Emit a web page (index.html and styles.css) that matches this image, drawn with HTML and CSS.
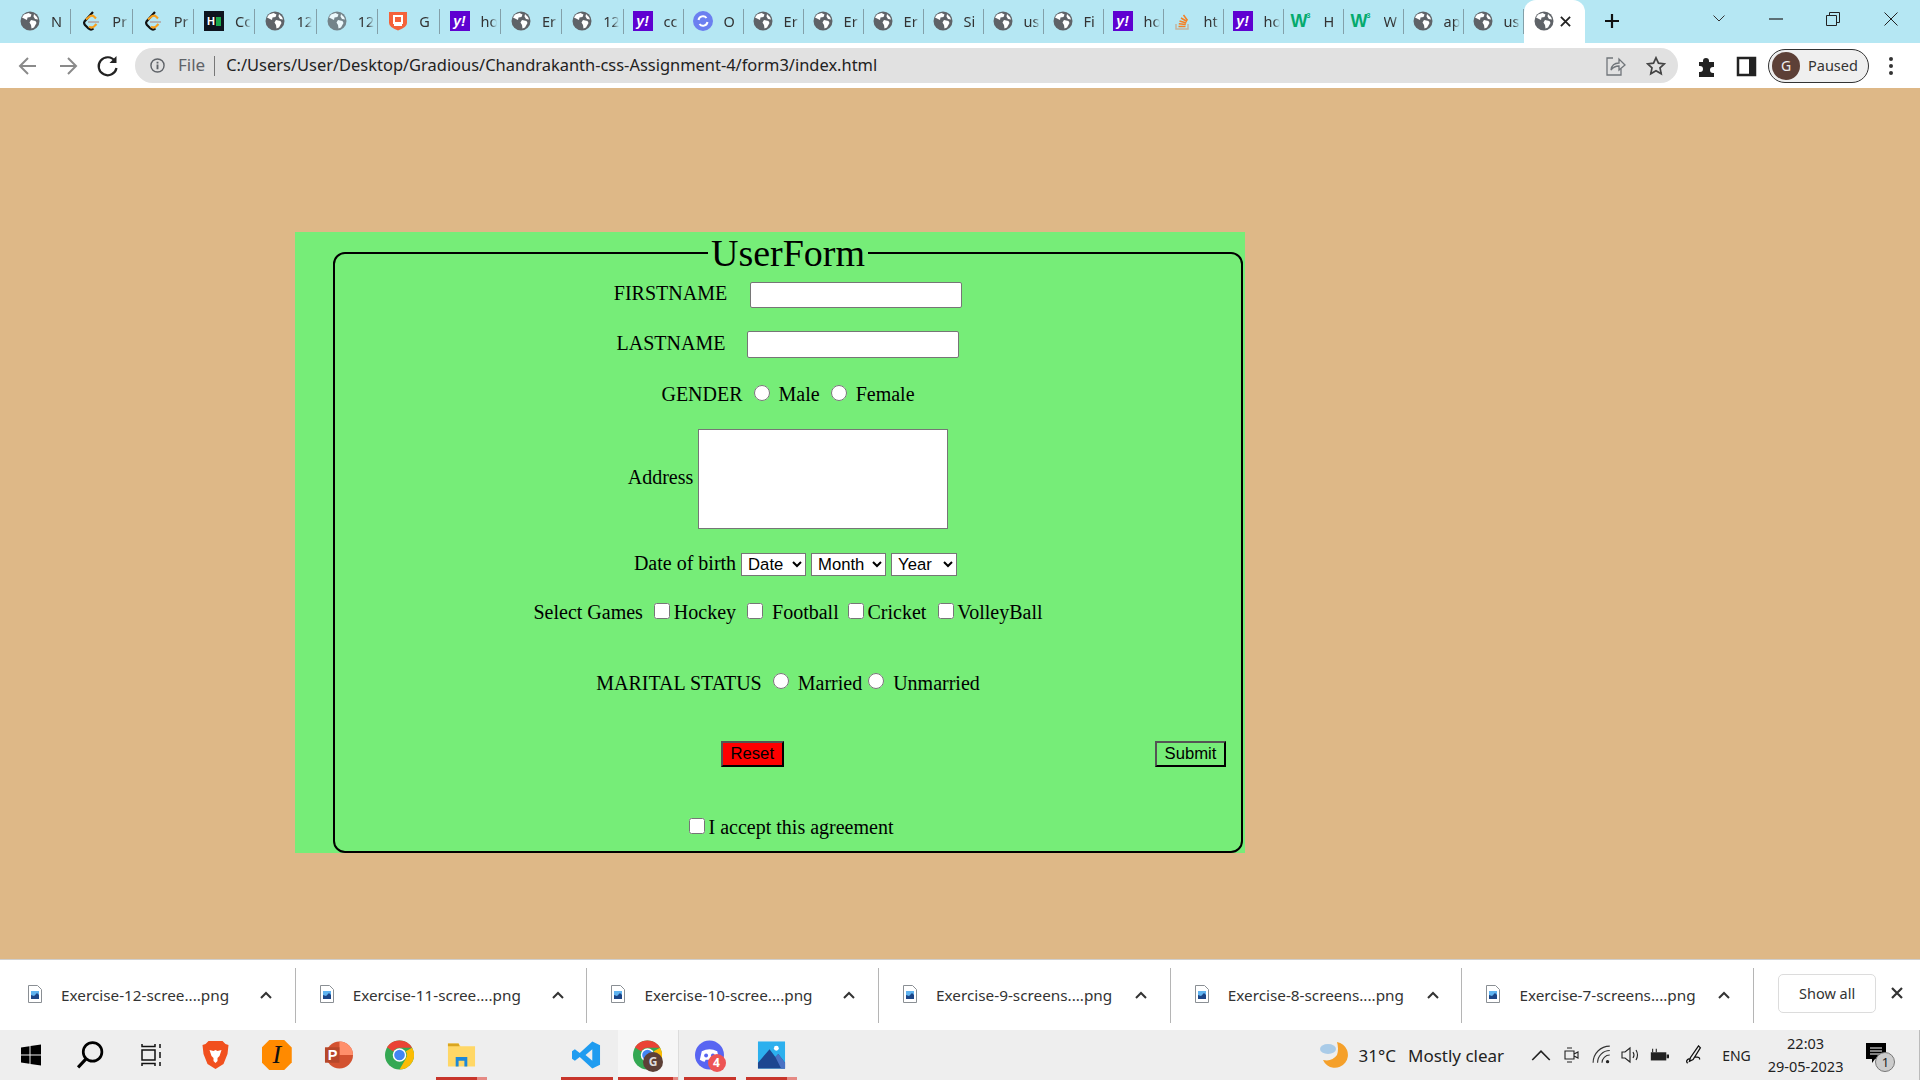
FILE: index.html
```html
<!DOCTYPE html>
<html lang="en">
<head>
  <meta charset="UTF-8" />
  <title>UserForm</title>
  <link rel="stylesheet" href="styles.css">
</head>
<body>

  <svg class="defs" width="0" height="0">
    <symbol id="globe" viewBox="0 0 20 20">
      <circle cx="10" cy="10" r="9.5" fill="currentColor"/>
      <path d="M4 3.5 8.5 2l3 1.5-1 2.5-3 .5-.5 2.5-3-1.5-2-1zM11 9l4.5 1 1 2-2.5 4.5-2.5 1-.5-3.500-1.500-2.500zM14 3l3 3 1 2.500-3-.5-1.500-2.500z" fill="#fff"/>
    </symbol>
    <symbol id="leet" viewBox="0 0 20 20">
      <path d="M12 1 3.500 10.500Q2.500 12 4 14l3.500 3.500q2.500 2 5 0" fill="none" stroke="#111" stroke-width="2.200"/>
      <path d="M7 11h11" stroke="#b3b3b3" stroke-width="2"/>
      <path d="M8 15.500q2.500 2 5 0l2.500-2.500" fill="none" stroke="#f89f1b" stroke-width="2.200"/>
      <path d="M5 8.500 9.500 5q2-1 3.500.5l2 2" fill="none" stroke="#f89f1b" stroke-width="2.200"/>
    </symbol>
    <symbol id="doc" viewBox="0 0 14 18">
      <path d="M.5.5h9l4 4v13H.5z" fill="#fff" stroke="#8a8f94"/>
      <path d="M3 6h8v8H3z" fill="#1c4587"/>
      <path d="M3 6h8v4l-2-2-3 3-3-1z" fill="#5fb3f0"/>
    </symbol>
    <symbol id="chev" viewBox="0 0 12 8">
      <path d="M1 7 6 2l5 5" fill="none" stroke="currentColor" stroke-width="2"/>
    </symbol>
    <symbol id="chrome" viewBox="0 0 30 30">
      <circle cx="15" cy="15" r="15" fill="#34a853"/>
      <path d="M15 0a15 15 0 0 1 13 7.500H15a7.500 7.500 0 0 0-6.500 3.750L2 7A15 15 0 0 1 15 0z" fill="#ea4335"/>
      <path d="M28 7.500A15 15 0 0 1 15 30l6.500-11.250A7.500 7.500 0 0 0 21.500 11z" fill="#fbbc04"/>
      <circle cx="15" cy="15" r="7" fill="#fff"/>
      <circle cx="15" cy="15" r="5.500" fill="#4285f4"/>
    </symbol>
  </svg>

  <div class="tabbar">
    <div class="tab"><svg class="fav"><use href="#globe"/></svg><span class="tab-title">N</span></div>
    <div class="tab"><svg class="fav"><use href="#leet"/></svg><span class="tab-title">Pr</span></div>
    <div class="tab"><svg class="fav"><use href="#leet"/></svg><span class="tab-title">Pr</span></div>
    <div class="tab"><span class="fav fav-hr">H<i></i></span><span class="tab-title">Cc</span></div>
    <div class="tab"><svg class="fav"><use href="#globe"/></svg><span class="tab-title">12</span></div>
    <div class="tab"><svg class="fav faded"><use href="#globe"/></svg><span class="tab-title">12</span></div>
    <div class="tab">
      <svg class="fav" viewBox="0 0 20 20"><path d="M1 1h18v11q0 4-9 7.500Q1 16 1 12z" fill="#f4623a"/><path d="M6 5h8v7H6zM6 14h8" fill="none" stroke="#fff" stroke-width="2"/></svg>
      <span class="tab-title">G</span>
    </div>
    <div class="tab"><span class="fav fav-y">y!</span><span class="tab-title">ho</span></div>
    <div class="tab"><svg class="fav"><use href="#globe"/></svg><span class="tab-title">Er</span></div>
    <div class="tab"><svg class="fav"><use href="#globe"/></svg><span class="tab-title">12</span></div>
    <div class="tab"><span class="fav fav-y">y!</span><span class="tab-title">cc</span></div>
    <div class="tab">
      <svg class="fav" viewBox="0 0 20 20"><circle cx="10" cy="10" r="10" fill="#6b7ff0"/><path d="M5.500 9a4.500 4.500 0 0 1 8-2M14.500 11a4.500 4.500 0 0 1-8 2" fill="none" stroke="#fff" stroke-width="2"/></svg>
      <span class="tab-title">O</span>
    </div>
    <div class="tab"><svg class="fav"><use href="#globe"/></svg><span class="tab-title">Er</span></div>
    <div class="tab"><svg class="fav"><use href="#globe"/></svg><span class="tab-title">Er</span></div>
    <div class="tab"><svg class="fav"><use href="#globe"/></svg><span class="tab-title">Er</span></div>
    <div class="tab"><svg class="fav"><use href="#globe"/></svg><span class="tab-title">Si</span></div>
    <div class="tab"><svg class="fav"><use href="#globe"/></svg><span class="tab-title">us</span></div>
    <div class="tab"><svg class="fav"><use href="#globe"/></svg><span class="tab-title">Fi</span></div>
    <div class="tab"><span class="fav fav-y">y!</span><span class="tab-title">ho</span></div>
    <div class="tab">
      <svg class="fav" viewBox="0 0 20 20"><path d="M3 13v5h12v-5" fill="none" stroke="#c4b5a0" stroke-width="1.500"/><path d="M5.500 15.500h7M5.800 12.800l7 .8M6.500 10l6.800 2M8 7l6 3.500M10.500 4l4 5.500" stroke="#f48024" stroke-width="1.500"/></svg>
      <span class="tab-title">ht</span>
    </div>
    <div class="tab"><span class="fav fav-y">y!</span><span class="tab-title">ho</span></div>
    <div class="tab"><span class="fav fav-w">W<sup>3</sup></span><span class="tab-title">H</span></div>
    <div class="tab"><span class="fav fav-w">W<sup>3</sup></span><span class="tab-title">W</span></div>
    <div class="tab"><svg class="fav"><use href="#globe"/></svg><span class="tab-title">ap</span></div>
    <div class="tab"><svg class="fav"><use href="#globe"/></svg><span class="tab-title">us</span></div>
    <div class="tab tab-active">
      <svg class="fav"><use href="#globe"/></svg>
      <svg class="tab-close" viewBox="0 0 12 12"><path d="M1 1l10 10M11 1 1 11" stroke="#222" stroke-width="2"/></svg>
    </div>
    <svg class="newtab" viewBox="0 0 16 16"><path d="M8 1v14M1 8h14" stroke="#111" stroke-width="2.200"/></svg>
    <div class="winctl">
      <svg class="ctl-list" viewBox="0 0 12 7"><path d="M.5.5 6 6 11.500.5" fill="none" stroke="#333"/></svg>
      <svg class="ctl-min" viewBox="0 0 14 2"><path d="M0 1h14" stroke="#222" stroke-width="1.200"/></svg>
      <svg class="ctl-max" viewBox="0 0 14 14"><path d="M.5 3.500h10v10H.5zM3.500 3.500v-3h10v10h-3" fill="none" stroke="#222"/></svg>
      <svg class="ctl-close" viewBox="0 0 14 14"><path d="M.5.5l13 13M13.500.5l-13 13" stroke="#222"/></svg>
    </div>
  </div>

  <div class="toolbar">
    <svg class="tool-icon" viewBox="0 0 40 40"><path d="M28 20H13M20 12l-8 8 8 8" fill="none" stroke="#8a8a8a" stroke-width="2"/></svg>
    <svg class="tool-icon" viewBox="0 0 40 40"><path d="M12 20h15M20 12l8 8-8 8" fill="none" stroke="#8a8a8a" stroke-width="2"/></svg>
    <svg class="tool-icon" viewBox="0 0 40 40"><path d="M27 15a9 9 0 1 0 1.500 7" fill="none" stroke="#222" stroke-width="2.200"/><path d="M28.500 10v7h-7z" fill="#222"/></svg>
    <div class="omnibox">
      <svg class="omni-info" viewBox="0 0 16 16"><circle cx="8" cy="8" r="7" fill="none" stroke="#5f6368" stroke-width="1.500"/><path d="M8 7v5M8 4v1.800" stroke="#5f6368" stroke-width="2"/></svg>
      <span class="omni-file">File</span>
      <span class="omni-sep"></span>
      <span class="omni-url">C:/Users/User/Desktop/Gradious/Chandrakanth-css-Assignment-4/form3/index.html</span>
      <svg class="omni-share" viewBox="0 0 20 20"><path d="M7 2H1v17h14v-6" fill="none" stroke="#70757a" stroke-width="1.300"/><path d="M5 14q1-7 8-7V3l6 6-6 5v-4q-5 0-8 4z" fill="none" stroke="#70757a" stroke-width="1.300"/></svg>
      <svg class="omni-star" viewBox="0 0 20 20"><path d="m10 1.800 2.500 5.400 5.900.7-4.400 4 1.200 5.800-5.200-3-5.200 3 1.200-5.800-4.400-4 5.900-.7z" fill="none" stroke="#444" stroke-width="1.700"/></svg>
    </div>
    <svg class="tool-icon ext" viewBox="0 0 40 40"><path d="M13 16h4v-1a3 3 0 0 1 6 0v1h5v5h-1a3 3 0 0 0 0 6h1v4H13v-5h1a3 3 0 0 0 0-6h-1z" fill="#222"/></svg>
    <svg class="tool-icon" viewBox="0 0 40 40"><path d="M12 12h17v17H12z" fill="none" stroke="#222" stroke-width="2.500"/><path d="M23 12h6v17h-6z" fill="#222"/></svg>
    <div class="profile"><span class="avatar">G</span><span class="profile-text">Paused</span></div>
    <svg class="tool-icon menu" viewBox="0 0 40 40"><circle cx="20" cy="13" r="2" fill="#333"/><circle cx="20" cy="20" r="2" fill="#333"/><circle cx="20" cy="27" r="2" fill="#333"/></svg>
  </div>

  <main class="page">
    <div class="form-box">
      <form class="user-form">
        <fieldset class="form-set">
          <legend>UserForm</legend>

          <div class="row row-first">
            <label class="name-label">FIRSTNAME</label>
            <input type="text" class="name-input">
          </div>
          <div class="row row-last">
            <label class="name-label">LASTNAME</label>
            <input type="text" class="name-input">
          </div>
          <div class="row row-gender">
            GENDER
            <input type="radio" name="gender"> Male
            <input type="radio" name="gender"> Female
          </div>
          <div class="row row-address">
            Address
            <textarea class="address"></textarea>
          </div>
          <div class="row row-dob">
            Date of birth
            <select class="sel-date"><option>Date</option></select>
            <select class="sel-month"><option>Month</option></select>
            <select class="sel-year"><option>Year</option></select>
          </div>
          <div class="row row-games">
            Select Games
            <input type="checkbox">Hockey
            <input type="checkbox"> Football
            <input type="checkbox" class="check-tight">Cricket
            <input type="checkbox">VolleyBall
          </div>
          <div class="row row-marital">
            MARITAL STATUS
            <input type="radio" name="marital"> Married<input type="radio" name="marital"> Unmarried
          </div>
          <div class="row row-buttons">
            <button type="reset" class="btn btn-reset">Reset</button>
            <button type="submit" class="btn btn-submit">Submit</button>
          </div>
          <div class="row row-accept">
            <input type="checkbox">I accept this agreement
          </div>
        </fieldset>
      </form>
    </div>
  </main>

  <div class="shelf">
    <div class="dl"><svg class="dl-doc"><use href="#doc"/></svg><span class="dl-name">Exercise-12-scree....png</span><svg class="dl-chev"><use href="#chev"/></svg></div>
    <div class="dl"><svg class="dl-doc"><use href="#doc"/></svg><span class="dl-name">Exercise-11-scree....png</span><svg class="dl-chev"><use href="#chev"/></svg></div>
    <div class="dl"><svg class="dl-doc"><use href="#doc"/></svg><span class="dl-name">Exercise-10-scree....png</span><svg class="dl-chev"><use href="#chev"/></svg></div>
    <div class="dl"><svg class="dl-doc"><use href="#doc"/></svg><span class="dl-name">Exercise-9-screens....png</span><svg class="dl-chev"><use href="#chev"/></svg></div>
    <div class="dl"><svg class="dl-doc"><use href="#doc"/></svg><span class="dl-name">Exercise-8-screens....png</span><svg class="dl-chev"><use href="#chev"/></svg></div>
    <div class="dl"><svg class="dl-doc"><use href="#doc"/></svg><span class="dl-name">Exercise-7-screens....png</span><svg class="dl-chev"><use href="#chev"/></svg></div>
    <button class="show-all">Show all</button>
    <svg class="shelf-close" viewBox="0 0 12 12"><path d="M1 1l10 10M11 1 1 11" stroke="#333" stroke-width="2.200"/></svg>
  </div>

  <footer class="taskbar">
    <div class="task">
      <svg class="task-icon" viewBox="0 0 24 24"><path d="M2 4.500 10.500 3.300v8.200H2zM11.500 3.100 22 1.600v9.900H11.500zM2 12.500h8.500v8.200L2 19.500zM11.500 12.500H22v9.900l-10.500-1.500z" fill="#000"/></svg>
    </div>
    <div class="task task-pull">
      <svg class="task-icon big" viewBox="0 0 28 28"><circle cx="16" cy="11" r="9" fill="none" stroke="#000" stroke-width="2.600"/><path d="M9.500 18 2 26" stroke="#000" stroke-width="3"/></svg>
    </div>
    <div class="task">
      <svg class="task-icon" viewBox="0 0 24 24"><path d="M2 1v2.500h13V1M2 23v-2.500h13V23M2 7h13v10H2zM20 1v4M20 9v6M20 19v4" fill="none" stroke="#111" stroke-width="1.500"/></svg>
    </div>
    <div class="task task-push">
      <svg class="task-icon big" viewBox="0 0 28 30"><path d="M7 1h14l3 3 3 1-1 9-4 10-8 5-8-5-4-10-1-9 3-1z" fill="#f1501e"/><path d="M8 10l4 1 2-1 2 1 4-1-2 6-2 2v3l-2 2-2-2v-3l-2-2z" fill="#fff"/></svg>
    </div>
    <div class="task">
      <span class="task-ink">I</span>
    </div>
    <div class="task">
      <svg class="task-icon big" viewBox="0 0 30 30"><circle cx="16" cy="15" r="14" fill="#d35230"/><path d="M16 1a14 14 0 0 1 14 14H16z" fill="#ff8f6b"/><path d="M1 7h15v16H1z" fill="#b7472a"/><text x="4" y="20" class="ppt-text">P</text></svg>
    </div>
    <div class="task">
      <svg class="task-icon big"><use href="#chrome"/></svg>
    </div>
    <div class="task task-run task-more">
      <svg class="task-icon big" viewBox="0 0 30 30"><path d="M1 3h11l2 3h15v21H1z" fill="#ffd766"/><path d="M1 3h11l1 3H1z" fill="#d9a520"/><path d="M9 17h12v10h-3v-6h-6v6H9z" fill="#1e88d8"/></svg>
    </div>
    <div class="task task-code task-run">
      <svg class="task-icon big" viewBox="0 0 30 30"><path d="M21 1l8 4v20l-8 4L8 17l-5 4-3-2v-8l3-2 5 4zM21 9l-7 6 7 6z" fill="#1f9cf0"/></svg>
    </div>
    <div class="task task-chrome task-run task-more">
      <svg class="task-icon big"><use href="#chrome"/></svg>
      <span class="task-badge badge-g">G</span>
    </div>
    <div class="task task-run">
      <svg class="task-icon big" viewBox="0 0 30 30"><circle cx="15" cy="15" r="15" fill="#5865f2"/><path d="M7 11q8-4 16 0l2 9q-3 2-5 2l-1-2H11l-1 2q-2 0-5-2z" fill="#fff"/><circle cx="11.500" cy="15.500" r="2" fill="#5865f2"/><circle cx="18.500" cy="15.500" r="2" fill="#5865f2"/></svg>
      <span class="task-badge badge-d">4</span>
    </div>
    <div class="task task-run task-more">
      <svg class="task-icon big" viewBox="0 0 30 30"><path d="M1 1h28v28H1z" fill="#2cb0ee"/><circle cx="20" cy="8" r="2.500" fill="#fff"/><path d="M1 29V23L13 9l6 8 3-3 7 9v6z" fill="#1d4690"/><path d="M19 17l3-3 7 9v6h-4z" fill="#4a72c4"/></svg>
    </div>

    <div class="tray">
      <svg class="tray-weather" viewBox="0 0 30 30"><path d="M18 2a13 13 0 1 1-14 18q9 2 14-5 2-6 0-13z" fill="#f5a02a"/><ellipse cx="9" cy="9" rx="8" ry="5" fill="#a9cbe8"/></svg>
      <span class="tray-temp">31°C</span>
      <span class="tray-cond">Mostly clear</span>
      <svg class="tray-icon tray-up" viewBox="0 0 16 10"><path d="M1 9l7-7 7 7" fill="none" stroke="#222" stroke-width="1.300"/></svg>
      <svg class="tray-icon tray-meet" viewBox="0 0 16 20"><path d="M1 6h9v8H1zM10 9l4-2v6l-4-2M3 3h5M3 17h5" fill="none" stroke="#222" stroke-width="1.100"/></svg>
      <svg class="tray-icon" viewBox="0 0 18 18"><path d="M1 16a15 15 0 0 1 15-15M5 16a11 11 0 0 1 11-11M9 16a7 7 0 0 1 7-7" fill="none" stroke="#333"/><circle cx="14" cy="15" r="1.500" fill="#222"/></svg>
      <svg class="tray-icon tray-vol" viewBox="0 0 20 18"><path d="M1 6h3l5-4v14l-5-4H1zM12 6q2 3 0 6M15 4q3 5 0 10" fill="none" stroke="#222" stroke-width="1.100"/></svg>
      <svg class="tray-icon tray-batt" viewBox="0 0 22 16"><path d="M2 5h17v9H2z" fill="#222"/><path d="M20 8h2v3h-2zM4 1v4M8 1v4" stroke="#222" stroke-width="1.200"/></svg>
      <svg class="tray-icon tray-pen" viewBox="0 0 20 22"><path d="M15 1 6 14l-1 4 4-2 8-13zM3 20q-3-3 2-5M11 13q6 0 5 3" fill="none" stroke="#111" stroke-width="1.400"/></svg>
      <span class="tray-lang">ENG</span>
      <div class="clock"><span>22:03</span><span>29-05-2023</span></div>
      <div class="notif">
        <svg class="notif-icon" viewBox="0 0 20 20"><path d="M0 0h20v16H9l-3 4v-4H0z" fill="#000"/><path d="M4 5h12M4 8h12M4 11h12" stroke="#fff"/></svg>
        <span class="notif-count">1</span>
      </div>
    </div>
  </footer>

</body>
</html>
```

FILE: styles.css
```css
* {
  box-sizing: border-box;
}

:root {
  --ui-font: "Noto Sans", "Open Sans", sans-serif;
  --tab-bg: #b5e7f3;
  --page-bg: #deb887;
  --form-bg: #76ed78;
  --task-bg: #eeeeee;
  --run-red: #c8352b;
}

html, body {
  margin: 0;
  height: 100%;
  overflow: hidden;
}

body {
  display: flex;
  flex-direction: column;
  width: 1920px;
  height: 1080px;
  font-family: var(--ui-font);
  color: #222;
  background: #fff;
}

.defs {
  position: absolute;
}

/* tab strip */
.tabbar {
  display: flex;
  height: 43px;
  padding-left: 10px;
  background: var(--tab-bg);
  flex: none;
}

.tab {
  position: relative;
  display: flex;
  align-items: center;
  width: 60px;
  padding: 0 0 1px 9px;
  flex: none;
}

.tab:nth-child(-n+10) {
  width: 61.37px;
  padding-left: 10px;
}

.tab::after {
  content: "";
  position: absolute;
  right: 0;
  top: 9px;
  height: 25px;
  width: 1px;
  background: #83a0a9;
}

.fav {
  display: block;
  width: 20px;
  height: 20px;
  flex: none;
  color: #5f6368;
}

.faded {
  opacity: 0.75;
}

.fav-hr {
  display: flex;
  align-items: center;
  justify-content: center;
  gap: 1px;
  background: #0e141e;
  color: #fff;
  font: bold 11px "Liberation Sans", sans-serif;
}

.fav-hr i {
  width: 5px;
  height: 9px;
  background: #1ba94c;
}

.fav-y {
  background: #5f01d1;
  color: #fff;
  font: italic bold 14px/20px "Liberation Sans", sans-serif;
  text-align: center;
}

.fav-w {
  color: #04aa6d;
  font: bold 18px/20px "Liberation Sans", sans-serif;
  letter-spacing: -1px;
  width: 24px;
  margin-left: -2px;
  margin-right: -2px;
}

.fav-w sup {
  font-size: 7px;
  line-height: 0;
  color: #04aa6d;
  vertical-align: 9px;
  letter-spacing: 0;
}

.tab-title {
  width: 16px;
  margin-left: 11px;
  font-size: 14.5px;
  white-space: nowrap;
  color: #333;
  -webkit-mask-image: linear-gradient(to right, #000 60%, transparent);
  mask-image: linear-gradient(to right, #000 60%, transparent);
}

.tab-active {
  width: 61px;
  padding-left: 10px;
  background: #fff;
  border-radius: 12px 12px 0 0;
}

.tab-active::after {
  display: none;
}

.tab-close {
  width: 11px;
  height: 11px;
  margin-left: 6px;
}

.newtab {
  width: 16px;
  height: 16px;
  margin: 13px 0 0 19px;
  flex: none;
}

.winctl {
  display: flex;
  align-items: center;
  flex: 1;
  height: 37px;
  padding-left: 93.5px;
}

.ctl-list {
  width: 12px;
  height: 7px;
}

.ctl-min {
  width: 14px;
  height: 2px;
  margin-left: 44px;
}

.ctl-max {
  width: 14px;
  height: 14px;
  margin-left: 43px;
}

.ctl-close {
  width: 14px;
  height: 14px;
  margin-left: 44px;
}

/* address bar row */
.toolbar {
  display: flex;
  align-items: center;
  height: 45px;
  padding-left: 8px;
  background: #fff;
  flex: none;
}

.tool-icon {
  width: 40px;
  height: 40px;
  flex: none;
}

.omnibox {
  display: flex;
  align-items: center;
  width: 1543px;
  height: 35px;
  margin-left: 7px;
  padding-left: 15px;
  border-radius: 18px;
  background: #e1e1e1;
  flex: none;
}

.omni-info {
  width: 15px;
  height: 15px;
}

.omni-file {
  margin: -2px 0 0 13px;
  font-size: 17px;
  color: #5f6368;
}

.omni-sep {
  width: 1px;
  height: 20px;
  margin-left: 9px;
  background: #777;
}

.omni-url {
  margin: -2px 0 0 11px;
  font-size: 16.45px;
  color: #222;
  white-space: nowrap;
}

.omni-share {
  width: 20px;
  height: 20px;
  margin-left: auto;
}

.omni-star {
  width: 20px;
  height: 20px;
  margin: 0 12px 0 20px;
}

.ext {
  margin-left: 8px;
}

.profile {
  display: flex;
  align-items: center;
  width: 101px;
  height: 34px;
  margin-left: 2px;
  padding-left: 3px;
  border: 1.5px solid #333;
  border-radius: 17px;
  background: #efefef;
  flex: none;
}

.avatar {
  width: 28px;
  height: 28px;
  border-radius: 50%;
  background: #5d4037;
  color: #eee;
  font-size: 14px;
  line-height: 28px;
  text-align: center;
}

.profile-text {
  margin: -2px 0 0 8px;
  font-size: 14.5px;
  color: #333;
}

.menu {
  margin-left: 2px;
}

/* the page itself */
.page {
  flex: 1;
  min-height: 0;
  padding: 144px 0 0 295px;
  background: var(--page-bg);
}

.form-box {
  display: flow-root;
  width: 950px;
  background: var(--form-bg);
  font-family: "Liberation Serif", serif;
  font-size: 20px;
  color: #000;
}

.user-form {
  display: flow-root;
  margin: -1px 2px 0 38px;
}

.form-set {
  margin: 0;
  padding: 0;
  min-width: 0;
  height: 622px;
  border: 2.5px solid #000;
  border-radius: 12px;
}

.form-set legend {
  margin: 0 auto;
  padding: 0 2.5px;
  font-size: 38px;
}

.row {
  text-align: center;
}

.row-first {
  margin-top: 7px;
}

.row-last {
  margin-top: 23px;
}

.row-gender {
  margin-top: 23px;
}

.row-address {
  margin-top: 23px;
}

.row-dob {
  margin-top: 23px;
  padding-left: 15px;
}

.row-games {
  margin-top: 23px;
}

.row-marital {
  margin-top: 46px;
}

.row-buttons {
  display: flex;
  justify-content: space-between;
  margin-top: 47px;
  padding: 0 15px 0 385.5px;
}

.row-accept {
  margin-top: 47px;
}

.name-label {
  margin-right: 18px;
}

.row-last .name-label {
  margin-right: 17px;
}

.name-input {
  width: 212px;
  height: 26px;
  margin: 0;
  padding: 1px 2px;
  border: 1px solid #767676;
  border-radius: 2px;
  background: #fff;
  font-size: 16.67px;
}

.row-last .name-input {
  height: 27px;
}

input[type="radio"],
input[type="checkbox"] {
  width: 16px;
  height: 16px;
  margin: 3.75px 3.75px 0 6.25px;
}

input.check-tight {
  margin-left: 4px;
}

.address {
  width: 250px;
  height: 100px;
  margin: 0;
  border: 1px solid #767676;
  vertical-align: middle;
  background: #fff;
  resize: none;
}

select {
  height: 23px;
  padding: 0 0 0 2px;
  border: 1px solid #767676;
  border-radius: 0;
  background: #fff;
  font-family: "Liberation Sans", sans-serif;
  font-size: 16.67px;
  color: #000;
}

.sel-date {
  width: 65px;
}

.sel-month {
  width: 75px;
}

.sel-year {
  width: 66px;
}

.btn {
  height: 26px;
  margin: 0;
  padding: 0 8px;
  border: 2.5px outset #000;
  background: transparent;
  font-family: "Liberation Sans", sans-serif;
  font-size: 16.67px;
  color: #000;
}

.btn-reset {
  background: #ff0000;
}

.btn-submit {
  width: 71px;
  padding: 0;
}

/* downloads */
.shelf {
  display: flex;
  align-items: center;
  height: 71px;
  padding-left: 4px;
  border-top: 1px solid #cfcfcf;
  background: #fff;
  flex: none;
}

.dl {
  position: relative;
  display: flex;
  align-items: center;
  width: 291.7px;
  height: 55px;
  padding-left: 24px;
  border-right: 1px solid #b5b5b5;
  flex: none;
}

.dl-doc {
  width: 14px;
  height: 18px;
  margin-bottom: 2px;
}

.dl-name {
  width: 199px;
  margin-left: 19px;
  font-size: 15.3px;
  color: #333;
  white-space: nowrap;
}

.dl-chev {
  width: 12px;
  height: 8px;
  color: #333;
}

.show-all {
  width: 98px;
  height: 39px;
  margin: -4px 0 0 24px;
  border: 1px solid #dcdcdc;
  border-radius: 5px;
  background: #fff;
  font-family: var(--ui-font);
  font-size: 14.5px;
  color: #333;
}

.shelf-close {
  width: 12px;
  height: 12px;
  margin: -4px 0 0 15px;
}

/* windows taskbar */
.taskbar {
  display: flex;
  align-items: center;
  height: 50px;
  background: var(--task-bg);
  flex: none;
}

.task {
  position: relative;
  display: flex;
  align-items: center;
  justify-content: center;
  width: 61.5px;
  height: 50px;
  flex: none;
}

.task-pull {
  margin-left: -2px;
}

.task-push {
  margin-left: 2px;
}

.task-icon {
  width: 24px;
  height: 24px;
}

.task-icon.big {
  width: 29px;
  height: 30px;
}

.task-run::after {
  content: "";
  position: absolute;
  left: 5px;
  right: 5px;
  bottom: 0;
  height: 3px;
  background: var(--run-red);
}

.task-more::after {
  background: linear-gradient(to right, var(--run-red) 80%, #e58a84 80%);
}

.task-code {
  margin-left: 64px;
}

.task-chrome {
  background: #f6f6f6;
  border-right: 1px solid #dcdcdc;
}

.task-chrome::after {
  left: 0;
  right: 0;
  background: linear-gradient(to right, var(--run-red) 92%, #e58a84 92%);
}

.task-ink {
  display: block;
  width: 30px;
  height: 30px;
  clip-path: polygon(25% 0, 75% 0, 100% 25%, 100% 75%, 75% 100%, 25% 100%, 0 75%, 0 25%);
  background: #ff8a00;
  color: #111;
  font: italic 26px/30px "Liberation Serif", serif;
  text-align: center;
}

.ppt-text {
  font: bold 15px "Liberation Sans", sans-serif;
  fill: #fff;
}

.task-badge {
  position: absolute;
  right: 15px;
  bottom: 8px;
  width: 18px;
  height: 18px;
  border-radius: 50%;
  font-size: 12px;
  font-weight: bold;
  line-height: 18px;
  text-align: center;
  color: #fff;
}

.badge-g {
  width: 20px;
  height: 20px;
  line-height: 20px;
  background: #5d4037;
  color: #ddd;
}

.badge-d {
  background: #ed5555;
}

.tray {
  display: flex;
  align-items: center;
  flex: 1;
  height: 50px;
  padding-left: 516.5px;
  border-right: 1px solid #bbb;
}

.tray-weather {
  width: 30px;
  height: 30px;
  flex: none;
}

.tray-temp {
  margin-left: 10px;
  font-size: 17px;
}

.tray-cond {
  margin-left: 12px;
  font-size: 17px;
  white-space: nowrap;
}

.tray-icon {
  width: 20px;
  height: 20px;
  margin-left: 10px;
  flex: none;
}

.tray-up {
  margin-left: 27px;
}

.tray-meet {
  margin-left: 11px;
}

.tray-vol {
  margin-left: 9px;
}

.tray-batt {
  margin-left: 8px;
}

.tray-pen {
  margin-left: 15px;
}

.tray-lang {
  margin-left: 18px;
  font-size: 14px;
}

.clock {
  display: flex;
  flex-direction: column;
  align-items: center;
  margin-left: 17px;
  font-size: 14.5px;
  line-height: 23px;
}

.notif {
  position: relative;
  width: 20px;
  height: 20px;
  margin: -4px 0 0 23px;
}

.notif-icon {
  display: block;
  width: 20px;
  height: 20px;
}

.notif-count {
  position: absolute;
  left: 9px;
  top: 9px;
  width: 20px;
  height: 20px;
  border: 1px solid #777;
  border-radius: 50%;
  background: #ccc;
  font-size: 13px;
  line-height: 18px;
  text-align: center;
  color: #222;
}
```
